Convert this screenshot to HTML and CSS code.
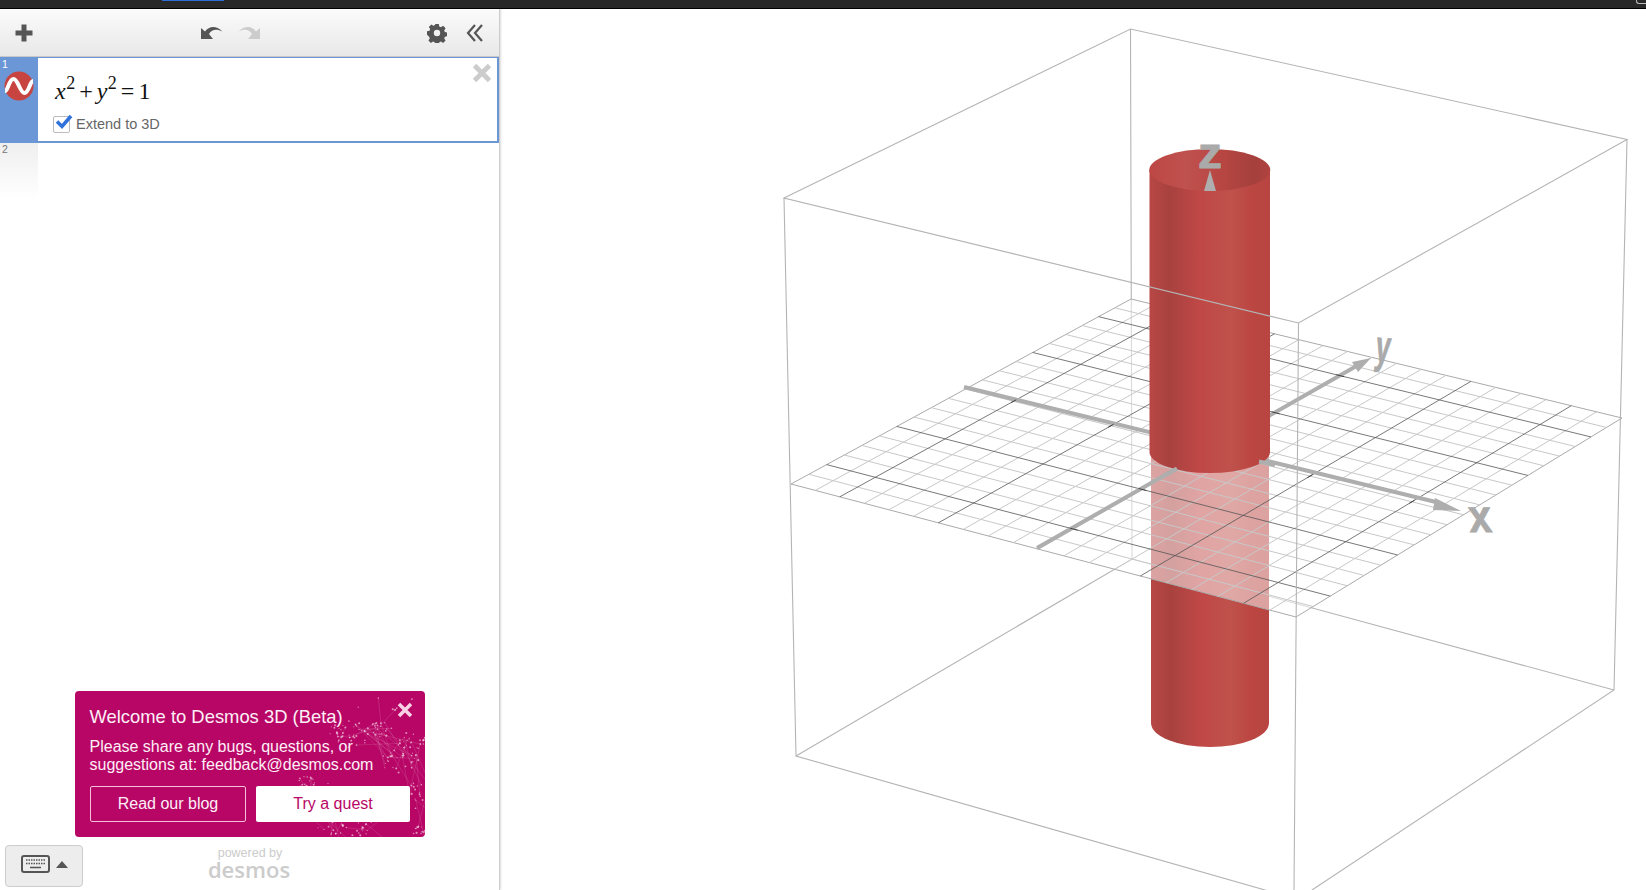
FILE: index.html
```html
<!DOCTYPE html>
<html lang="en">
<head>
<meta charset="utf-8">
<title>Desmos 3D</title>
<link rel="stylesheet" href="styles.css">
<script src="script.js" defer></script>
</head>
<body>
<div class="topbar"><div class="topbar-tab"></div><div class="topbar-corner"></div></div>
<div class="main">
  <aside class="panel">
    <div class="toolbar">
      <svg class="tool-add" width="20" height="20" viewBox="0 0 20 20"><path class="ic-dark-stroke" d="M10 1.500v17M1.500 10h17"/></svg>
      <div class="tool-history">
        <svg width="22" height="14" viewBox="0 0 22 14"><path class="ic-dark" d="M0 13V2l4 3.500C8 0 15-1 21.500 5.500 16 3 11 3 8 8l4 5z"/></svg>
        <svg width="22" height="14" viewBox="0 0 22 14"><path class="ic-light" d="M22 13V2l-4 3.500C14 0 7-1 .5 5.500 6 3 11 3 14 8l-4 5z"/></svg>
      </div>
      <div class="tool-right">
        <svg width="20" height="20" viewBox="0 0 20 20"><path class="ic-dark" fill-rule="evenodd" d="M8.200 1h3.600l.5 2.500 1.700.7 2.100-1.400 2.500 2.500-1.400 2.100.7 1.700 2.500.5v3.600l-2.500.5-.7 1.700 1.400 2.100-2.500 2.500-2.100-1.400-1.700.7-.5 2.500H8.200l-.5-2.500-1.700-.7-2.100 1.400-2.500-2.500 1.400-2.100-.7-1.700L0 11.800V8.200l2.500-.5.7-1.700-1.400-2.100 2.500-2.500 2.100 1.400 1.700-.7zM10 6.800a3.200 3.200 0 1 0 0 6.400 3.200 3.200 0 0 0 0-6.400z"/></svg>
        <svg width="18" height="20" viewBox="0 0 18 20"><path class="ic-chevron" d="M9 2 2 10l7 8M16 2 9 10l7 8"/></svg>
      </div>
    </div>
    <div class="row row-active">
      <div class="row-tab">
        <span class="row-num">1</span>
        <svg class="row-icon" width="30" height="30" viewBox="0 0 30 30"><circle cx="15" cy="15" r="14.500" fill="#c74440"/><path class="ic-wave" d="M1 20C4 20 5 8 9.500 8 14 8 16 22 20.500 22 25 22 26 10 29 10"/></svg>
      </div>
      <div class="row-body">
        <div class="math"><i>x</i><sup>2</sup><span class="op">+</span><i>y</i><sup>2</sup><span class="op">=</span><span>1</span></div>
        <label class="extend">
          <span class="check"><svg width="19" height="17" viewBox="0 0 19 17"><path class="ic-check" d="M3 7.500 8 12.500 17 2"/></svg></span>
          <span>Extend to 3D</span>
        </label>
        <svg class="row-del" width="20" height="20" viewBox="0 0 20 20"><path class="ic-del" d="M2.500 2.500l15 15M17.500 2.500l-15 15"/></svg>
      </div>
    </div>
    <div class="row row-empty">
      <div class="row-tab"><span class="row-num">2</span></div>
    </div>

    <div class="popup">
      <svg id="globe" class="popup-globe" width="350" height="146" viewBox="0 0 350 146"></svg>
      <svg class="popup-close" width="16" height="16" viewBox="0 0 16 16"><path class="ic-close" d="M2 2l12 12M14 2 2 14"/></svg>
      <h2 class="popup-title">Welcome to Desmos 3D (Beta)</h2>
      <p class="popup-text">Please share any bugs, questions, or suggestions at: feedback@desmos.com</p>
      <div class="popup-actions">
        <a class="btn btn-outline">Read our blog</a>
        <a class="btn btn-solid">Try a quest</a>
      </div>
    </div>

    <div class="keyboard">
      <svg width="29" height="18" viewBox="0 0 29 18"><rect class="ic-kbd" x="1" y="1" width="27" height="16" rx="2"/><path class="ic-keys" d="M5 5h19M5 8.500h19"/><path class="ic-space" d="M9 12.500h11"/></svg>
      <span class="keyboard-caret"></span>
    </div>
    <div class="powered">
      <span class="powered-by">powered by</span>
      <span class="powered-logo">desmos</span>
    </div>
  </aside>

  <main class="canvas">
    <svg class="scene" width="1146" height="881" viewBox="500 9 1146 881">
      <defs>
        <linearGradient id="cyl">
          <stop offset="0" stop-color="#b74744"/>
          <stop offset=".17" stop-color="#a8423f"/>
          <stop offset=".42" stop-color="#c04846"/>
          <stop offset=".68" stop-color="#bf514b"/>
          <stop offset=".85" stop-color="#bb4642"/>
          <stop offset="1" stop-color="#b84541"/>
        </linearGradient>
        <linearGradient id="cylIn">
          <stop offset="0" stop-color="#bd4744"/>
          <stop offset=".3" stop-color="#bf514e"/>
          <stop offset=".6" stop-color="#b74642"/>
          <stop offset=".87" stop-color="#a4403d"/>
          <stop offset="1" stop-color="#b04240"/>
        </linearGradient>
      </defs>

      <!-- box edges behind the plane -->
      <path class="edge" d="M1130.500 29 1132 559M796 756 1132 559 1614 690"/>

      <!-- lower part of the cylinder, seen through the plane -->
      <path fill="url(#cyl)" d="M1151 440V723A59 24 0 0 0 1269 723V440z"/>

      <!-- plane -->
      <polygon class="plane" points="791,484 1296,617 1622,418 1131,299"/>
      <g id="grid"></g>

      <!-- axes -->
      <path class="axis" d="M964 387 1440 503M1037 548 1360 364"/>
      <g id="ticks"></g>
      <polygon class="axis-head" points="1461,511 1435,498 1433,510"/>
      <polygon class="axis-head" points="1371,358 1352,362 1358,372"/>
      <text class="axis-label" transform="translate(1470 532) scale(.88 1) skewX(6)">x</text>
      <text class="axis-label" transform="translate(1374 362) rotate(4) skewX(-4) scale(.56 1)">y</text>

      <!-- upper part of the cylinder -->
      <path fill="url(#cyl)" d="M1149.500 170V452A60.250 21 0 0 0 1270 452V170z"/>
      <ellipse fill="url(#cylIn)" cx="1209.750" cy="170" rx="60.500" ry="21"/>
      <polygon class="axis-head" points="1210,170 1204,191 1216,191"/>
      <text class="axis-label" transform="translate(1198 168) scale(1.040 .92)">z</text>
      <path class="axis" d="M1259 461.500 1275 465M1160 478 1177 468.500"/>

      <!-- box edges in front -->
      <path class="edge" d="M784 198 1130.500 29 1627 139.500 1298.500 323ZM784 198 796 756 1300 900M1627 139.500 1614 690 1312 890M1298.500 323 1294 890"/>
    </svg>
  </main>
</div>
</body>
</html>
```
FILE: styles.css
```css
* { box-sizing: border-box; }
html, body { margin: 0; height: 100%; }
body {
  display: flex;
  flex-direction: column;
  height: 890px;
  overflow: hidden;
  background: #fff;
  font-family: "Liberation Sans", Arial, sans-serif;
}
.topbar {
  flex: 0 0 9px;
  background: #282828;
  border-bottom: 1px solid #000;
  display: flex;
  justify-content: space-between;
}
.topbar-tab { margin-left: 162px; width: 62px; height: 1px; background: #2b6fd6; }
.topbar-corner { width: 10px; height: 4px; border-left: 1px solid #bbb; border-bottom: 1px solid #bbb; border-bottom-left-radius: 3px; }
.main { flex: 1; display: flex; min-height: 0; }

.panel {
  position: relative;
  flex: 0 0 500px;
  border-right: 1px solid #ccc;
  box-shadow: 1px 0 2px rgba(0,0,0,.14);
  background: #fff;
}
.toolbar {
  height: 48px;
  display: flex;
  align-items: center;
  position: relative;
  padding: 0 15px 0 14px;
  background: linear-gradient(#fbfbfb, #e8e8e8);
  border-bottom: 1px solid #c8c8c8;
}
.tool-history { position: absolute; left: 201px; top: 17px; display: flex; gap: 15px; }
.tool-right { margin-left: auto; display: flex; align-items: center; gap: 19px; }
.ic-dark { fill: #555; }
.ic-light { fill: #ccc; }
.ic-dark-stroke { fill: none; stroke: #555; stroke-width: 5; }
.ic-chevron { fill: none; stroke: #555; stroke-width: 2.200; }

.row { display: flex; }
.row-active { height: 86px; border-top: 1px solid #6b97d6; border-right: 2px solid #6b97d6; border-bottom: 2px solid #6b97d6; }
.row-empty { height: 56px; }
.row-tab { position: relative; width: 38px; flex: none; }
.row-active .row-tab { background: #6b97d6; }
.row-empty .row-tab { background: linear-gradient(#efefef, #fff); }
.row-num { position: absolute; left: 2px; top: 0; font-size: 10.500px; line-height: 12px; color: #777; }
.row-active .row-num { color: #fff; }
.row-icon { position: absolute; left: 4px; top: 13px; }
.ic-wave { fill: none; stroke: #fff; stroke-width: 4; }
.row-body { position: relative; flex: 1; padding: 18px 0 0 17px; }
.math { font-family: "Liberation Serif", "Times New Roman", serif; font-size: 24px; line-height: 30px; color: #111; display: flex; align-items: baseline; }
.math sup { font-size: 18px; line-height: 0; position: relative; top: -10px; margin-left: .5px; vertical-align: baseline; }
.op { margin: 0 4px; }
.extend { display: flex; align-items: center; gap: 6px; margin-top: 9px; margin-left: -2px; font-size: 14.500px; line-height: 18px; color: #666; }
.check { position: relative; width: 17px; height: 17px; border: 1px solid #bbb; border-radius: 2px; background: #fff; }
.check svg { position: absolute; left: 0; top: -3px; }
.ic-check { fill: none; stroke: #2f72dc; stroke-width: 3.500; }
.row-del { position: absolute; right: 5px; top: 5px; }
.ic-del { fill: none; stroke: #ccc; stroke-width: 4.800; }

.popup {
  position: absolute;
  left: 75px;
  top: 682px;
  width: 350px;
  height: 146px;
  padding: 15px 15px 0 14.500px;
  background: #b80666;
  border-radius: 4px;
  overflow: hidden;
  color: #fdeff6;
}
.popup-globe { position: absolute; left: 0; top: 0; }
.popup-close { position: absolute; right: 12px; top: 11px; }
.ic-close { fill: none; stroke: #f8d2e5; stroke-width: 3.500; }
.popup-title { position: relative; margin: 0; font-weight: 400; font-size: 18.400px; line-height: 21px; }
.popup-text { position: relative; margin: 11px 0 0; width: 300px; font-size: 16px; line-height: 18px; }
.popup-actions { position: relative; display: flex; gap: 10px; margin-top: 12px; margin-left: .5px; }
.btn { display: flex; align-items: center; justify-content: center; height: 36px; border-radius: 2px; font-size: 16px; }
.btn-outline { width: 156px; border: 1px solid #f3bfd9; }
.btn-solid { width: 154px; background: #fff; color: #b80666; }

.keyboard {
  position: absolute;
  left: 5px;
  top: 836px;
  width: 78px;
  height: 42px;
  display: flex;
  align-items: center;
  gap: 6px;
  padding: 0 0 4px 15px;
  background: #ededed;
  border: 1px solid #ccc;
  border-radius: 4px;
}
.ic-kbd { fill: none; stroke: #555; stroke-width: 2; }
.ic-keys { fill: none; stroke: #555; stroke-width: 1.500; stroke-dasharray: 1.500 1; }
.ic-space { fill: none; stroke: #555; stroke-width: 1.500; }
.keyboard-caret { width: 0; height: 0; border: 6px solid transparent; border-top: 0; border-bottom: 7px solid #555; }

.powered {
  position: absolute;
  left: 75px;
  top: 837px;
  width: 350px;
  display: flex;
  flex-direction: column;
  align-items: center;
  color: #ccc;
}
.powered-by { font-size: 12.500px; line-height: 14px; }
.powered-logo { font-family: "Open Sans", sans-serif; font-size: 22px; font-weight: 600; line-height: 18px; position: relative; left: -1px; }

.canvas { flex: 1; min-width: 0; }
.scene { display: block; }
.edge { fill: none; stroke: #b4b4b4; stroke-width: 1.100; }
.plane { fill: #fff; fill-opacity: .5; stroke: #aaa; stroke-width: 1; }
.minor { stroke: #c8c8c8; stroke-width: 1; }
.major { stroke: #555; stroke-width: .8; }
.axis { fill: none; stroke: #aeaeae; stroke-width: 4; }
.axis-head { fill: #aeaeae; }
.axis-tick { stroke: #444; stroke-width: 1; }
.axis-label { font-family: "Liberation Sans", Arial, sans-serif; font-weight: 700; font-size: 46px; fill: #aaa; stroke: #aaa; stroke-width: 1; }
.globe-line { stroke: #fff; stroke-opacity: .17; stroke-width: .7; }
.globe-dot { fill: #fff; fill-opacity: .55; }
```
FILE: script.js
```js
// Perspective grid of the z = 0 plane, from its four projected corners.
(function () {
  var NS = "http://www.w3.org/2000/svg";
  var P = [[791, 484], [1296, 617], [1622, 418], [1131, 299]];
  var x0 = P[0][0], y0 = P[0][1], x1 = P[1][0], y1 = P[1][1];
  var x2 = P[2][0], y2 = P[2][1], x3 = P[3][0], y3 = P[3][1];
  var dx1 = x1 - x2, dx2 = x3 - x2, dy1 = y1 - y2, dy2 = y3 - y2;
  var sx = x0 - x1 + x2 - x3, sy = y0 - y1 + y2 - y3;
  var den = dx1 * dy2 - dx2 * dy1;
  var g = (sx * dy2 - dx2 * sy) / den, h = (dx1 * sy - sx * dy1) / den;
  var a = x1 - x0 + g * x1, b = x3 - x0 + h * x3, d = y1 - y0 + g * y1, e = y3 - y0 + h * y3;
  function map(s, t) {
    var w = g * s + h * t + 1;
    return [(a * s + b * t + x0) / w, (d * s + e * t + y0) / w];
  }
  function line(parent, p, q, cls) {
    var l = document.createElementNS(NS, "line");
    l.setAttribute("x1", p[0]); l.setAttribute("y1", p[1]);
    l.setAttribute("x2", q[0]); l.setAttribute("y2", q[1]);
    l.setAttribute("class", cls);
    parent.appendChild(l);
  }
  var grid = document.getElementById("grid");
  var ticks = document.getElementById("ticks");
  var pass, i;
  for (pass = 0; pass < 2; pass++) {
    for (i = 1; i < 20; i++) {
      var major = (i + 2) % 4 === 0 && i !== 10;
      if (major !== (pass === 1)) continue;
      var f = i / 20;
      line(grid, map(f, 0), map(f, 1), major ? "major" : "minor");
      line(grid, map(0, f), map(1, f), major ? "major" : "minor");
      if (major) {
        line(ticks, map(f, .492), map(f, .508), "axis-tick");
        line(ticks, map(.492, f), map(.508, f), "axis-tick");
      }
    }
  }

  // Dotted globe on the welcome card: clusters of dots on a sphere, joined by faint lines.
  var globe = document.getElementById("globe");
  var seed = 23;
  function rnd() { seed = (seed * 16807) % 2147483647; return seed / 2147483647; }
  var clusters = [[275, 44, 14], [338, 50, 10], [325, 70, 12], [232, 92, 7], [342, 105, 14], [275, 136, 15], [240, 120, 6], [305, 38, 8], [345, 140, 5]];
  var pts = [];
  clusters.forEach(function (c) {
    var n = Math.round(c[2] * 2.6);
    for (var k = 0; k < n; k++) {
      var an = rnd() * Math.PI * 2, r = c[2] * Math.sqrt(rnd()) * 1.2;
      pts.push([c[0] + r * Math.cos(an) * 1.3, c[1] + r * Math.sin(an) * .8]);
    }
  });
  var cx = 318, cy = 92;
  for (i = 0; i < 50; i++) {
    var ang = rnd() * Math.PI * 2, rad = 58 + rnd() * 30;
    pts.push([cx + rad * Math.cos(ang), cy + rad * Math.sin(ang)]);
  }
  var count = 0;
  for (i = 0; i < 500 && count < 55; i++) {
    var p = pts[Math.floor(rnd() * pts.length)];
    var q = pts[Math.floor(rnd() * pts.length)];
    var dist = Math.hypot(p[0] - q[0], p[1] - q[1]);
    if (dist < 16 || dist > 50) continue;
    line(globe, p, q, "globe-line");
    count++;
  }
  pts.forEach(function (pt) {
    var c = document.createElementNS(NS, "circle");
    c.setAttribute("cx", pt[0]); c.setAttribute("cy", pt[1]);
    c.setAttribute("r", .5 + rnd() * .6);
    c.setAttribute("class", "globe-dot");
    globe.appendChild(c);
  });
})();
```
